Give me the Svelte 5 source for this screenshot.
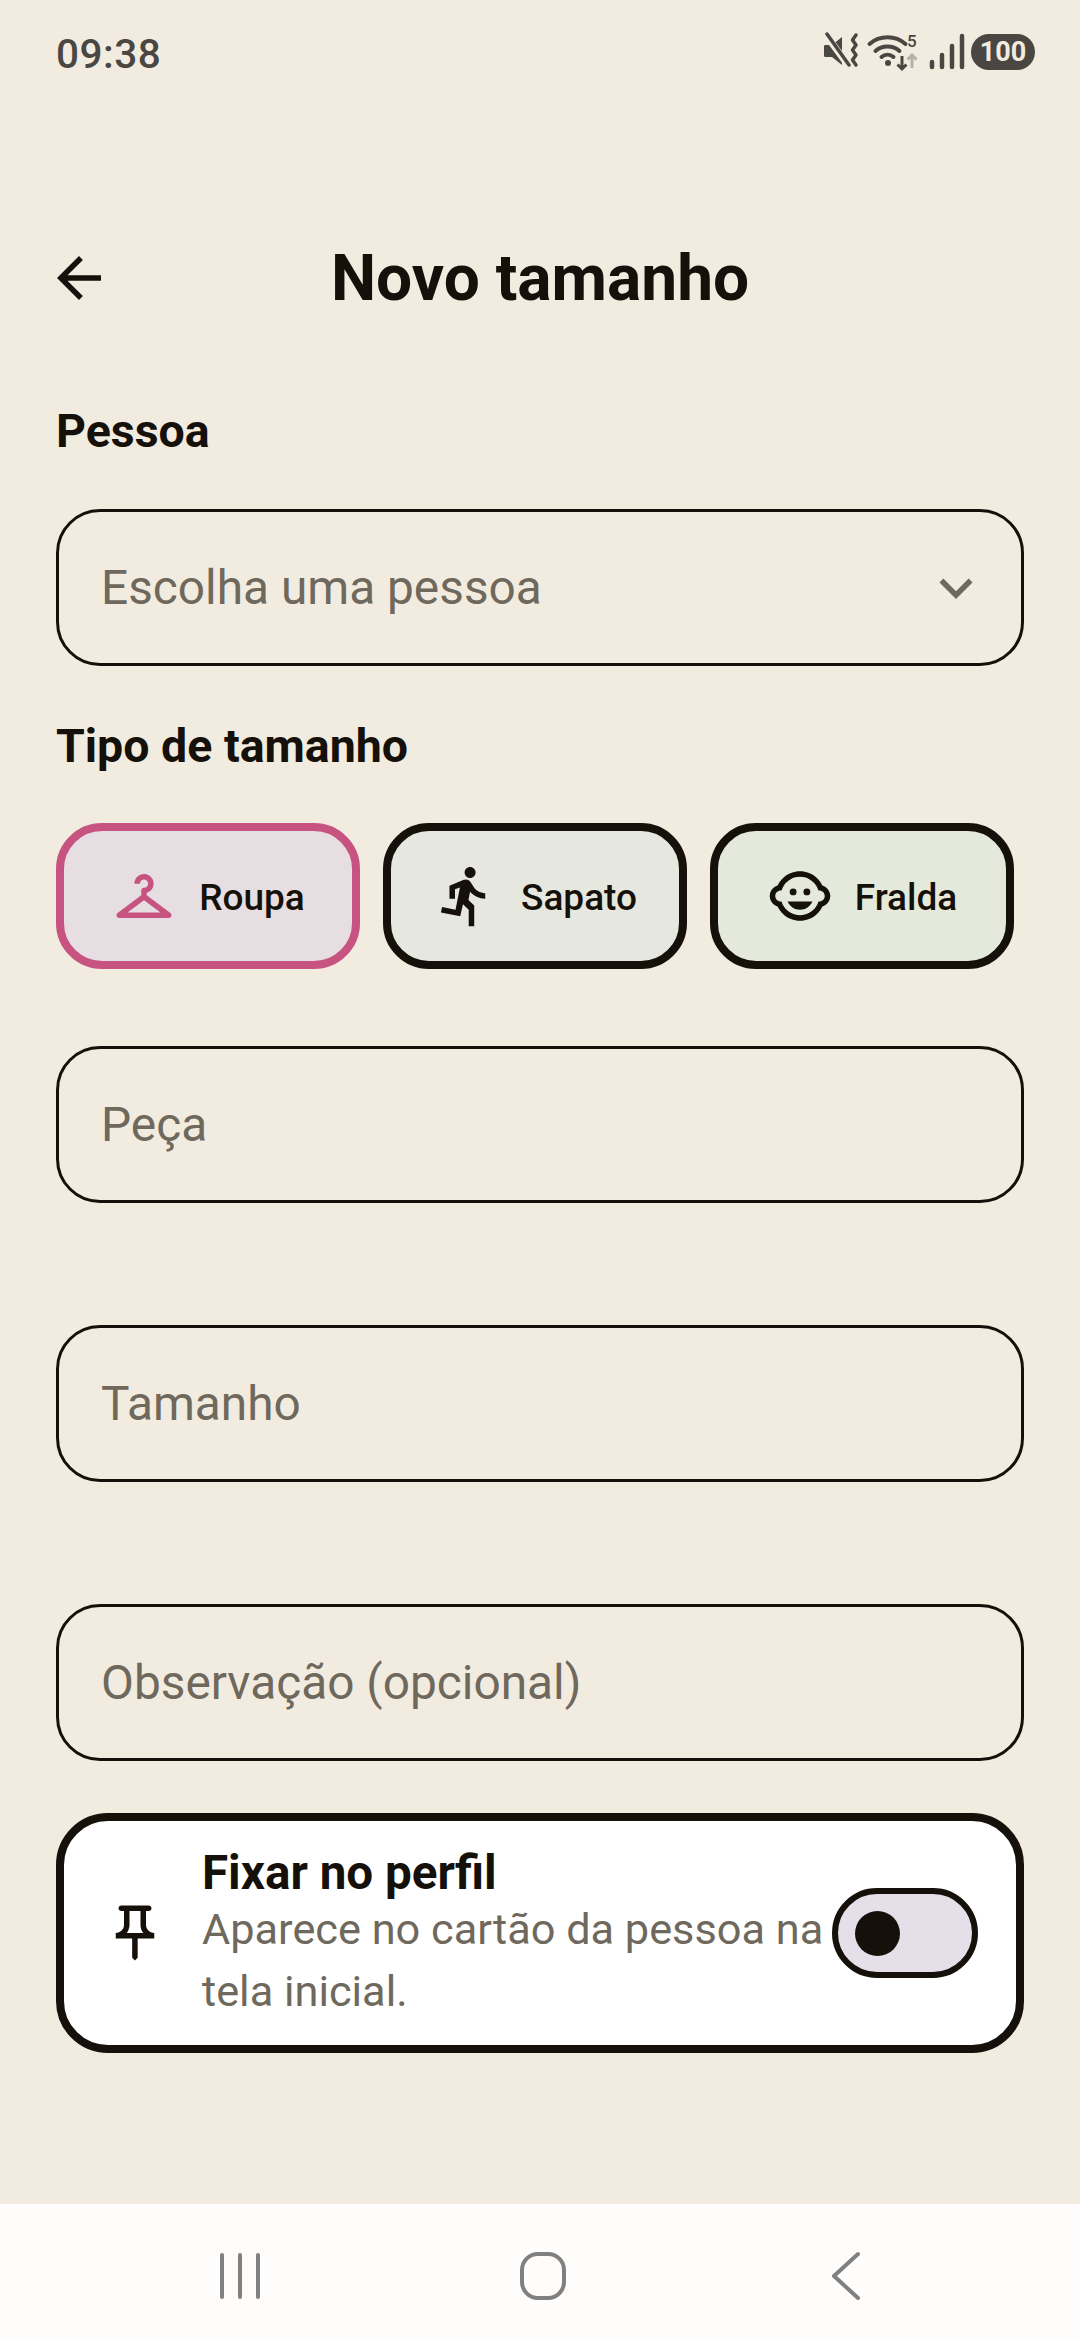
<script>
  const chips = [
    {
      label: 'Roupa',
      cls: 'selected',
      paths: ['M21.6 18.2 13 11.75v-.91c1.65-.49 2.8-2.17 2.43-4.05-.26-1.31-1.3-2.4-2.61-2.7C10.54 3.57 8.5 5.3 8.5 7.5h2c0-.83.67-1.5 1.5-1.5s1.5.67 1.5 1.5c0 .84-.69 1.52-1.53 1.5-.54-.01-.97.45-.97.99v1.76L2.4 18.2c-.77.58-.36 1.8.6 1.8h18c.96 0 1.37-1.22.6-1.8zM6 18l6-4.5 6 4.5H6z']
    },
    {
      label: 'Sapato',
      cls: 'shoe',
      paths: ['M13.49 5.48c1.1 0 2-.9 2-2s-.9-2-2-2-2 .9-2 2 .9 2 2 2zm-3.6 13.9l1-4.4 2.1 2v6h2v-7.5l-2.1-2 .6-3c1.3 1.5 3.3 2.5 5.5 2.5v-2c-1.9 0-3.5-1-4.3-2.4l-1-1.6c-.4-.6-1-1-1.7-1-.3 0-.5.1-.8.1l-5.2 2.2v4.7h2v-3.4l1.8-.7-1.6 8.1-4.9-1-.4 2 7 1.4z']
    },
    {
      label: 'Fralda',
      cls: 'diaper',
      paths: [
        'M22.94 11.34c-.25-1.51-1.36-2.74-2.81-3.17-.53-1.12-1.28-2.1-2.19-2.91C16.36 3.85 14.28 3 12 3s-4.36.85-5.94 2.26c-.92.81-1.67 1.8-2.19 2.91-1.45.43-2.56 1.65-2.81 3.17-.04.21-.06.43-.06.66 0 .23.02.45.06.66.25 1.51 1.36 2.74 2.81 3.17.52 1.11 1.27 2.09 2.17 2.89C7.62 20.14 9.71 21 12 21s4.38-.86 5.97-2.28c.9-.8 1.65-1.79 2.17-2.89 1.44-.43 2.55-1.65 2.8-3.17.04-.21.06-.43.06-.66 0-.23-.02-.45-.06-.66zM19 14c-.1 0-.19-.02-.29-.03-.2.67-.49 1.29-.86 1.86C16.6 17.74 14.45 19 12 19s-4.6-1.26-5.85-3.17c-.37-.57-.66-1.19-.86-1.86-.1.01-.19.03-.29.03-1.1 0-2-.9-2-2s.9-2 2-2c.1 0 .19.02.29.03.2-.67.49-1.29.86-1.86C7.4 6.26 9.55 5 12 5s4.6 1.26 5.85 3.17c.37.57.66 1.19.86 1.86.1-.01.19-.03.29-.03 1.1 0 2 .9 2 2s-.9 2-2 2z',
        'M7.5 14c.76 1.77 2.49 3 4.5 3s3.74-1.23 4.5-3h-9z',
        'M14.5 9.25a1.25 1.25 0 1 1 0 2.5 1.25 1.25 0 0 1 0-2.5z',
        'M9.5 9.25a1.25 1.25 0 1 1 0 2.5 1.25 1.25 0 0 1 0-2.5z'
      ]
    }
  ];

  const fields = ['Peça', 'Tamanho', 'Observação (opcional)'];
</script>

<div class="screen">
  <div class="status">
    <span class="time">09:38</span>
    <div class="status-icons">
      <svg class="sys" width="148" height="40" viewBox="0 0 148 40">
        <!-- mute + vibrate -->
        <path d="M2 13h7l10 -8v28l-10 -8h-7a1.500 1.500 0 0 1 -1 -1.500v-9a1.500 1.500 0 0 1 1 -1.500z" fill="#4a4742" />
        <path d="M3 3l22 30" stroke="#f2ece0" stroke-width="7" />
        <path d="M4 2l22 31" stroke="#4a4742" stroke-width="3.500" stroke-linecap="round" />
        <path d="M33 3l-3.500 5 3.500 5-3.500 5 3.500 5-3.500 5 3.500 5" fill="none" stroke="#4a4742" stroke-width="3.500" stroke-linecap="round" stroke-linejoin="round" />
        <!-- wifi -->
        <g fill="none" stroke="#4a4742" stroke-width="4" stroke-linecap="round" transform="translate(1.500 0)">
          <path d="M45 12c10-9 26-9 36 0" />
          <path d="M51 19c6.500-6 17.500-6 24 0" />
          <path d="M57 25c3.500-3 8.500-3 12 0" />
        </g>
        <circle cx="65" cy="31" r="3" fill="#4a4742" />
        <text x="84" y="15" class="wifi-five">5</text>
        <path d="M79 24v13M74.500 32.500l4.500 4.500 4.500-4.500" fill="none" stroke="#4a4742" stroke-width="3" />
        <path d="M89 36v-13M84.500 27.500l4.500-4.500 4.500 4.500" fill="none" stroke="#b5b1a8" stroke-width="3" />
        <!-- signal -->
        <g stroke="#4a4742" stroke-width="4.500" stroke-linecap="round">
          <path d="M109 30v5" />
          <path d="M119 23v12" />
          <path d="M129 14v21" />
          <path d="M139 4v31" />
        </g>
      </svg>
      <span class="battery">100</span>
    </div>
  </div>

  <header class="top">
    <svg class="back" width="66" height="66" viewBox="0 0 24 24">
      <path d="M20 11H7.830l5.590-5.590L12 4l-8 8 8 8 1.410-1.410L7.830 13H20v-2z" />
    </svg>
    <h1>Novo tamanho</h1>
  </header>

  <main class="form">
    <p class="label first">Pessoa</p>
    <div class="field">
      <span>Escolha uma pessoa</span>
      <svg width="66" height="66" viewBox="0 0 24 24" class="chevron">
        <path d="M16.590 8.590 12 13.170 7.410 8.590 6 10l6 6 6-6z" />
      </svg>
    </div>

    <p class="label second">Tipo de tamanho</p>
    <div class="chips">
      {#each chips as chip}
        <div class="chip {chip.cls}">
          <svg width="66" height="66" viewBox="0 0 24 24">
            {#each chip.paths as d}
              <path {d} />
            {/each}
          </svg>
          <span>{chip.label}</span>
        </div>
      {/each}
    </div>

    <div class="inputs">
      {#each fields as field}
        <div class="field"><span>{field}</span></div>
      {/each}
    </div>

    <div class="pin-card">
      <svg width="66" height="66" viewBox="0 0 24 24" class="pin">
        <path d="M14 4v5c0 1.120.370 2.160 1 3H9c.650-.860 1-1.900 1-3V4h4m3-2H7c-.550 0-1 .450-1 1s.450 1 1 1h1v5c0 1.660-1.340 3-3 3v2h5.970v7l1 1 1-1v-7H19v-2c-1.660 0-3-1.340-3-3V4h1c.550 0 1-.450 1-1s-.450-1-1-1z" />
      </svg>
      <div class="pin-text">
        <strong>Fixar no perfil</strong>
        <p>Aparece no cartão da pessoa na tela inicial.</p>
      </div>
      <div class="switch"><i></i></div>
    </div>
  </main>

  <nav class="sysnav">
    <svg width="44" height="48" viewBox="0 0 44 48">
      <path d="M4 3v42M22 3v42M40 3v42" />
    </svg>
    <svg class="home" width="48" height="50" viewBox="0 0 48 50">
      <rect x="3" y="3" width="42" height="44" rx="16" />
    </svg>
    <svg width="32" height="50" viewBox="0 0 32 50">
      <path d="M28 3 4 25l24 22" />
    </svg>
  </nav>
</div>

<style>
  :global(body) {
    margin: 0;
    background: #f2ece0;
  }

  .screen {
    width: 1080px;
    height: 2340px;
    display: flex;
    flex-direction: column;
    background: #f2ece0;
    color: #15110a;
    font-family: Roboto, sans-serif;
    overflow: hidden;
  }

  .status {
    height: 104px;
    box-sizing: border-box;
    padding: 0 45px 0 56px;
    display: flex;
    align-items: center;
    justify-content: space-between;
    color: #4a4742;
  }

  .time {
    font-size: 40.500px;
    font-weight: 500;
    letter-spacing: 0.5px;
    padding-top: 4px;
  }

  .status-icons {
    display: flex;
    align-items: center;
    gap: 0;
  }

  .wifi-five {
    font-size: 17px;
    font-weight: 500;
    font-family: Roboto, sans-serif;
    fill: #4a4742;
  }

  .battery {
    width: 64px;
    height: 36px;
    border-radius: 18px;
    background: #4a4742;
    color: #f2ece0;
    font-size: 27px;
    font-weight: 700;
    line-height: 36px;
    text-align: center;
  }

  .top {
    margin-top: 104px;
    height: 140px;
    position: relative;
    display: flex;
    align-items: center;
    justify-content: center;
  }

  .back {
    position: absolute;
    left: 46px;
    top: 37px;
    fill: #15110a;
  }

  h1 {
    margin: 0;
    padding-top: 2px;
    font-size: 64px;
    font-weight: 700;
    line-height: 1;
  }

  .form {
    padding: 0 56px;
    display: flex;
    flex-direction: column;
  }

  .label {
    margin: 0;
    font-size: 46.500px;
    font-weight: 700;
    line-height: 56px;
  }

  .label.first {
    margin-top: 55px;
    margin-bottom: 50px;
  }

  .label.second {
    margin-top: 52px;
    margin-bottom: 49px;
  }

  .field {
    height: 157px;
    box-sizing: border-box;
    border: 3px solid #15110a;
    border-radius: 44px;
    padding: 0 32px 0 42px;
    display: flex;
    align-items: center;
    justify-content: space-between;
    color: #6f685c;
    font-size: 47.800px;
  }

  .chevron {
    fill: #6f685c;
  }

  .chips {
    display: flex;
    gap: 23px;
  }

  .chip {
    width: 304px;
    height: 146px;
    box-sizing: border-box;
    border: 8px solid #15110a;
    border-radius: 46px;
    display: flex;
    align-items: center;
    justify-content: center;
    gap: 22px;
    font-size: 37px;
    font-weight: 500;
    fill: #15110a;
  }

  .chip span {
    padding-top: 2px;
  }

  .chip.selected {
    border-color: #c75480;
    background: #e6dee0;
    fill: #c75480;
  }

  .chip.shoe {
    background: #e6e8df;
  }

  .chip.diaper {
    background: #e4e9db;
  }

  .inputs {
    margin-top: 77px;
    display: flex;
    flex-direction: column;
    gap: 122px;
  }

  .pin-card {
    margin-top: 52px;
    height: 240px;
    box-sizing: border-box;
    border: 8px solid #15110a;
    border-radius: 52px;
    background: #fff;
    display: flex;
    align-items: center;
    padding: 0 38px 0 38px;
  }

  .pin {
    flex: none;
    fill: #15110a;
  }

  .pin-text {
    width: 624px;
    margin-left: 34px;
    flex: none;
    padding-top: 3px;
  }

  .pin-text strong {
    display: block;
    font-size: 47.600px;
    font-weight: 700;
    line-height: 52px;
  }

  .pin-text p {
    margin: 0;
    font-size: 43.300px;
    line-height: 62px;
    color: #6f685c;
  }

  .switch {
    width: 146px;
    height: 90px;
    flex: none;
    box-sizing: border-box;
    margin-left: 6px;
    border: 6px solid #15110a;
    border-radius: 45px;
    background: #e4dfe8;
    display: flex;
    align-items: center;
    padding-left: 17px;
  }

  .switch i {
    width: 45px;
    height: 45px;
    border-radius: 50%;
    background: #15110a;
  }

  .sysnav {
    margin-top: auto;
    height: 136px;
    box-sizing: border-box;
    padding: 8px 218px 0;
    background: #fffdfb;
    display: flex;
    align-items: center;
    justify-content: space-between;
  }

  .sysnav .home {
    margin-right: 7px;
  }

  .sysnav svg {
    fill: none;
    stroke: #808080;
    stroke-width: 4;
    stroke-linecap: round;
    stroke-linejoin: round;
  }
</style>
